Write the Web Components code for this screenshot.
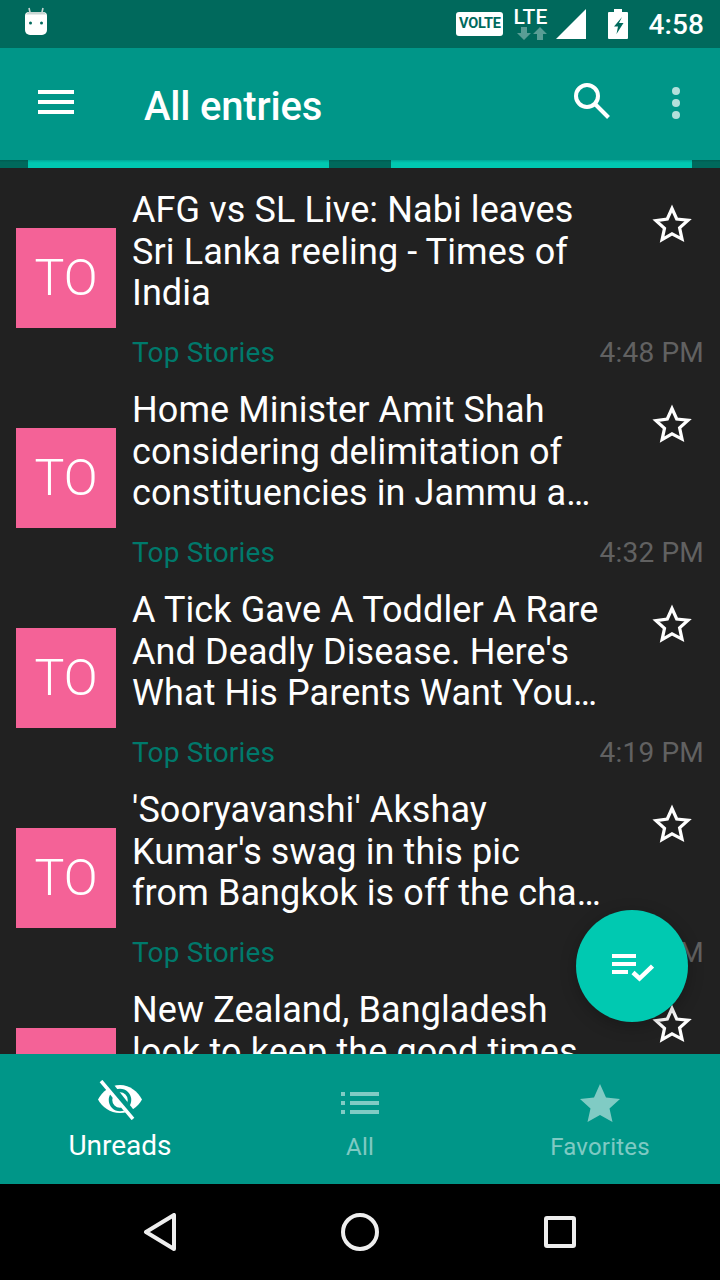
<!DOCTYPE html>
<html>
<head>
<meta charset="utf-8">
<style>
html, body { margin: 0; height: 100%; background: #212121; }
body { font-family: Roboto, "Liberation Sans", sans-serif; }
</style>
</head>
<body>
<app-shell>
  <status-bar slot="status"></status-bar>
  <app-toolbar slot="toolbar" title="All entries"></app-toolbar>
  <tab-strip slot="toolbar"></tab-strip>
  <entry-item time="4:48 PM">AFG vs SL Live: Nabi leaves Sri Lanka reeling - Times of India</entry-item>
  <entry-item time="4:32 PM">Home Minister Amit Shah considering delimitation of constituencies in Jammu a…</entry-item>
  <entry-item time="4:19 PM">A Tick Gave A Toddler A Rare And Deadly Disease. Here's What His Parents Want You…</entry-item>
  <entry-item time="4:05 PM">'Sooryavanshi' Akshay Kumar's swag in this pic from Bangkok is off the cha…</entry-item>
  <entry-item clipped>New Zealand, Bangladesh look to keep the good times</entry-item>
  <fab-button slot="fab"></fab-button>
  <bottom-nav slot="bottom"></bottom-nav>
  <system-nav slot="system"></system-nav>
</app-shell>

<script>
const shellTemplate = document.createElement("template");
shellTemplate.innerHTML = `
<style>
:host { display: flex; flex-direction: column; position: relative; height: 1280px; width: 720px; overflow: hidden; background: #212121; }
main { flex: 1; min-height: 0; overflow: hidden; }
</style>
<slot name="status"></slot>
<slot name="toolbar"></slot>
<main><slot></slot></main>
<slot name="bottom"></slot>
<slot name="system"></slot>
<slot name="fab"></slot>`;

class AppShell extends HTMLElement {
  constructor() {
    super();
    this.attachShadow({ mode: "open" });
    this.shadowRoot.appendChild(shellTemplate.content.cloneNode(true));
  }
}

const statusTemplate = document.createElement("template");
statusTemplate.innerHTML = `
<style>
:host { display: flex; align-items: center; height: 48px; background: #00695c; color: #fff; padding: 0 16px 0 24px; box-sizing: border-box; }
svg { display: block; flex: none; }
.robot { margin-top: -4px; }
.spacer { flex: 1; }
.volte { width: 47px; height: 24px; background: #fff; color: #00695c; border-radius: 3px; font: 700 14.500px/24px Roboto, sans-serif; text-align: center; letter-spacing: -.2px; }
.lte { display: flex; flex-direction: column; align-items: center; width: 36px; margin: 0 8px 0 9px; }
.lte span { font: 500 21px/18px Roboto, sans-serif; letter-spacing: .2px; }
.lte svg { margin: 1px 0 0 4px; }
.signal { margin-right: 22px; }
.time { font: 500 28px/48px Roboto, sans-serif; letter-spacing: .1px; margin-left: 20px; margin-top: 1px; }
</style>
<svg class="robot" width="24" height="30" viewBox="0 0 24 30">
  <path d="M5 1l1.400 6M19 1l-1.400 6" stroke="#c8d6d3" stroke-width="1.600" fill="none"/>
  <path d="M5 5h14a4 4 0 0 1 4 4v14a5 5 0 0 1-5 5H6a5 5 0 0 1-5-5V9a4 4 0 0 1 4-4z" fill="#fff"/>
  <path d="M2 7.500A4 4 0 0 1 5 5h14a4 4 0 0 1 3 2.500z" fill="#c8d6d3"/>
  <circle cx="6.500" cy="16" r="1.500" fill="#00695c"/><circle cx="17.500" cy="16" r="1.500" fill="#00695c"/>
</svg>
<div class="spacer"></div>
<div class="volte">VOLTE</div>
<div class="lte">
  <span>LTE</span>
  <svg width="30" height="13" viewBox="0 0 30 13" fill="#fff" fill-opacity=".35">
    <path d="M4 0h6v6h4l-7 7-7-7h4zM20 13h6V7h4l-7-7-7 7h4z"/>
  </svg>
</div>
<svg class="signal" width="30" height="30" viewBox="0 0 30 30"><path d="M0 30L30 0v30z" fill="#fff"/></svg>
<svg width="20" height="30" viewBox="0 0 20 30">
  <path d="M6 0h8v3h5a1 1 0 0 1 1 1v25a1 1 0 0 1-1 1H1a1 1 0 0 1-1-1V4a1 1 0 0 1 1-1h5z" fill="#fff"/>
  <path d="M14 8L6 17.500h4L8.500 25l7-11h-4.500z" fill="#00695c"/>
</svg>
<div class="time">4:58</div>`;

class StatusBar extends HTMLElement {
  constructor() {
    super();
    this.attachShadow({ mode: "open" });
    this.shadowRoot.appendChild(statusTemplate.content.cloneNode(true));
  }
}

const toolbarTemplate = document.createElement("template");
toolbarTemplate.innerHTML = `
<style>
:host { display: flex; align-items: center; height: 112px; background: #009688; color: #fff; box-sizing: border-box; }
svg { display: block; flex: none; }
.menu { margin-left: 38px; margin-top: -4px; }
h1 { flex: 1; margin: 6px 0 0 70px; font: 500 40px/106px Roboto, sans-serif; letter-spacing: -.2px; }
.search { margin-right: 62px; margin-top: -6px; }
.more { margin-right: 40px; margin-top: -2px; }
</style>
<svg class="menu" width="36" height="24" viewBox="0 0 36 24" fill="#fff"><path d="M0 0h36v4H0zM0 10h36v4H0zM0 20h36v4H0z"/></svg>
<h1 id="title"></h1>
<svg class="search" width="36" height="36" viewBox="0 0 36 36" fill="none" stroke="#fff" stroke-width="4"><circle cx="13" cy="13" r="11"/><path d="M21 21l13.500 13.500"/></svg>
<svg class="more" width="8" height="32" viewBox="0 0 8 32" fill="#fff" fill-opacity=".7"><circle cx="4" cy="4" r="4"/><circle cx="4" cy="16" r="4"/><circle cx="4" cy="28" r="4"/></svg>`;

class AppToolbar extends HTMLElement {
  constructor() {
    super();
    this.attachShadow({ mode: "open" });
    this.shadowRoot.appendChild(toolbarTemplate.content.cloneNode(true));
  }

  connectedCallback() {
    this.shadowRoot.getElementById("title").textContent = this.getAttribute("title");
  }
}

const tabsTemplate = document.createElement("template");
tabsTemplate.innerHTML = `
<style>
:host { display: flex; height: 8px; background: linear-gradient(#005c50, #00695c 30%); padding: 0 28px; gap: 62px; }
div { flex: 1; background: linear-gradient(#00a898, #00c9b1 35%); }
</style>
<div></div><div></div>`;

class TabStrip extends HTMLElement {
  constructor() {
    super();
    this.attachShadow({ mode: "open" });
    this.shadowRoot.appendChild(tabsTemplate.content.cloneNode(true));
  }
}

const entryTemplate = document.createElement("template");
entryTemplate.innerHTML = `
<style>
:host { display: grid; grid-template-columns: 100px 1fr 32px; grid-template-rows: 170px 30px; column-gap: 16px; height: 200px; padding: 0 16px; box-sizing: border-box; overflow: hidden; }
.thumb { align-self: start; margin-top: 60px; width: 100px; height: 100px; background: #f46297; color: #fff; font: 300 50px/100px Roboto, sans-serif; text-align: center; }
.title { margin-top: 22px; width: 472px; color: #fff; font: 400 36px/41.500px Roboto, sans-serif; letter-spacing: .1px; }
.star { margin-top: 36px; margin-left: -20px; }
.footer { grid-column: 2 / 4; display: flex; justify-content: space-between; align-items: center; font: 400 28px/30px Roboto, sans-serif; letter-spacing: .2px; }
:host([clipped]) .footer { display: none; }
.feed { color: #00796b; }
.time { color: #616161; }
</style>
<div class="thumb">TO</div>
<div class="title"><slot></slot></div>
<svg class="star" width="40" height="40" viewBox="0 0 40 40"><path d="M20 4.500l4.700 10.500 11.400 1.200-8.500 7.700 2.400 11.200L20 29.900l-9.900 5.700 2.400-11.200-8.500-7.700L15.300 15z" fill="none" stroke="#fff" stroke-width="3.200"/></svg>
<div class="footer"><span class="feed">Top Stories</span><span class="time"></span></div>`;

class EntryItem extends HTMLElement {
  constructor() {
    super();
    this.attachShadow({ mode: "open" });
    this.shadowRoot.appendChild(entryTemplate.content.cloneNode(true));
  }

  connectedCallback() {
    this.shadowRoot.querySelector(".time").textContent = this.getAttribute("time");
  }
}

const fabTemplate = document.createElement("template");
fabTemplate.innerHTML = `
<style>
:host { position: absolute; left: 576px; top: 910px; width: 112px; height: 112px; border-radius: 50%; background: #00c9b1; box-shadow: 0 4px 16px rgba(0,0,0,.25); display: flex; align-items: center; justify-content: center; }
svg { margin: 4px 0 0 2px; }
</style>
<svg width="42" height="28" viewBox="0 0 42 28" fill="#fff"><path d="M0 0h24v4H0zM0 8h24v4H0zM0 16h16v4H0z"/><path d="M21 18.500l6.500 6 13-12.500" fill="none" stroke="#fff" stroke-width="4.500"/></svg>`;

class FabButton extends HTMLElement {
  constructor() {
    super();
    this.attachShadow({ mode: "open" });
    this.shadowRoot.appendChild(fabTemplate.content.cloneNode(true));
  }
}

const navItemTemplate = document.createElement("template");
navItemTemplate.innerHTML = `
<style>
:host { flex: 1; display: flex; flex-direction: column; align-items: center; color: rgba(255,255,255,.5); font: 400 24px/28px Roboto, sans-serif; letter-spacing: .2px; padding-top: 18px; }
:host([active]) { color: #fff; font-size: 28px; letter-spacing: 0; padding-top: 15px; }
.icon { height: 61px; display: flex; align-items: center; justify-content: center; }
:host([active]) .icon { height: 63px; padding-bottom: 2px; box-sizing: border-box; }
</style>
<div class="icon"><slot name="icon"></slot></div>
<slot></slot>`;

class NavItem extends HTMLElement {
  constructor() {
    super();
    this.attachShadow({ mode: "open" });
    this.shadowRoot.appendChild(navItemTemplate.content.cloneNode(true));
  }
}

const bottomTemplate = document.createElement("template");
bottomTemplate.innerHTML = `
<style>
:host { display: flex; height: 130px; background: #009688; }
svg { display: block; }
</style>
<nav-item active>
  <svg slot="icon" width="44" height="40" viewBox="0 0 44 40">
    <path d="M22 5C12 5 4 12 0 19.500 4 27 12 33 22 33s18-6 22-13.500C40 12 32 5 22 5z" fill="#fff"/>
    <circle cx="22" cy="20" r="9.500" fill="none" stroke="#009688" stroke-width="3.500"/>
    <path d="M7 0l30 38" stroke="#009688" stroke-width="8"/>
    <path d="M3 1l32 38" stroke="#fff" stroke-width="3.500"/>
  </svg>
  Unreads
</nav-item>
<nav-item>
  <svg slot="icon" width="38" height="22" viewBox="0 0 38 22" fill="currentColor"><path d="M0 0h4v4H0zM9 0h29v4H9zM0 9h4v4H0zM9 9h29v4H9zM0 18h4v4H0zM9 18h29v4H9z"/></svg>
  All
</nav-item>
<nav-item>
  <svg slot="icon" width="40" height="38" viewBox="0 0 40 38" fill="currentColor"><path d="M20 0l6 13.500 14 1.500-10.500 9.500 3 13.500L20 31l-12.500 7 3-13.500L0 15l14-1.500z"/></svg>
  Favorites
</nav-item>`;

class BottomNav extends HTMLElement {
  constructor() {
    super();
    this.attachShadow({ mode: "open" });
    this.shadowRoot.appendChild(bottomTemplate.content.cloneNode(true));
  }
}

const systemTemplate = document.createElement("template");
systemTemplate.innerHTML = `
<style>
:host { display: flex; justify-content: space-between; align-items: center; height: 96px; background: #000; padding: 0 144px 0 142px; box-sizing: border-box; }
svg { display: block; }
</style>
<svg width="34" height="38" viewBox="0 0 34 38" fill="none" stroke="#eee" stroke-width="4" stroke-linejoin="round"><path d="M32 2v34L4 19z"/></svg>
<svg width="38" height="38" viewBox="0 0 38 38" fill="none" stroke="#eee" stroke-width="4"><circle cx="19" cy="19" r="17"/></svg>
<svg width="32" height="32" viewBox="0 0 32 32" fill="none" stroke="#eee" stroke-width="4" stroke-linejoin="round"><rect x="2" y="2" width="28" height="28" rx="1"/></svg>`;

class SystemNav extends HTMLElement {
  constructor() {
    super();
    this.attachShadow({ mode: "open" });
    this.shadowRoot.appendChild(systemTemplate.content.cloneNode(true));
  }
}

customElements.define("app-shell", AppShell);
customElements.define("status-bar", StatusBar);
customElements.define("app-toolbar", AppToolbar);
customElements.define("tab-strip", TabStrip);
customElements.define("entry-item", EntryItem);
customElements.define("fab-button", FabButton);
customElements.define("nav-item", NavItem);
customElements.define("bottom-nav", BottomNav);
customElements.define("system-nav", SystemNav);
</script>
</body>
</html>
